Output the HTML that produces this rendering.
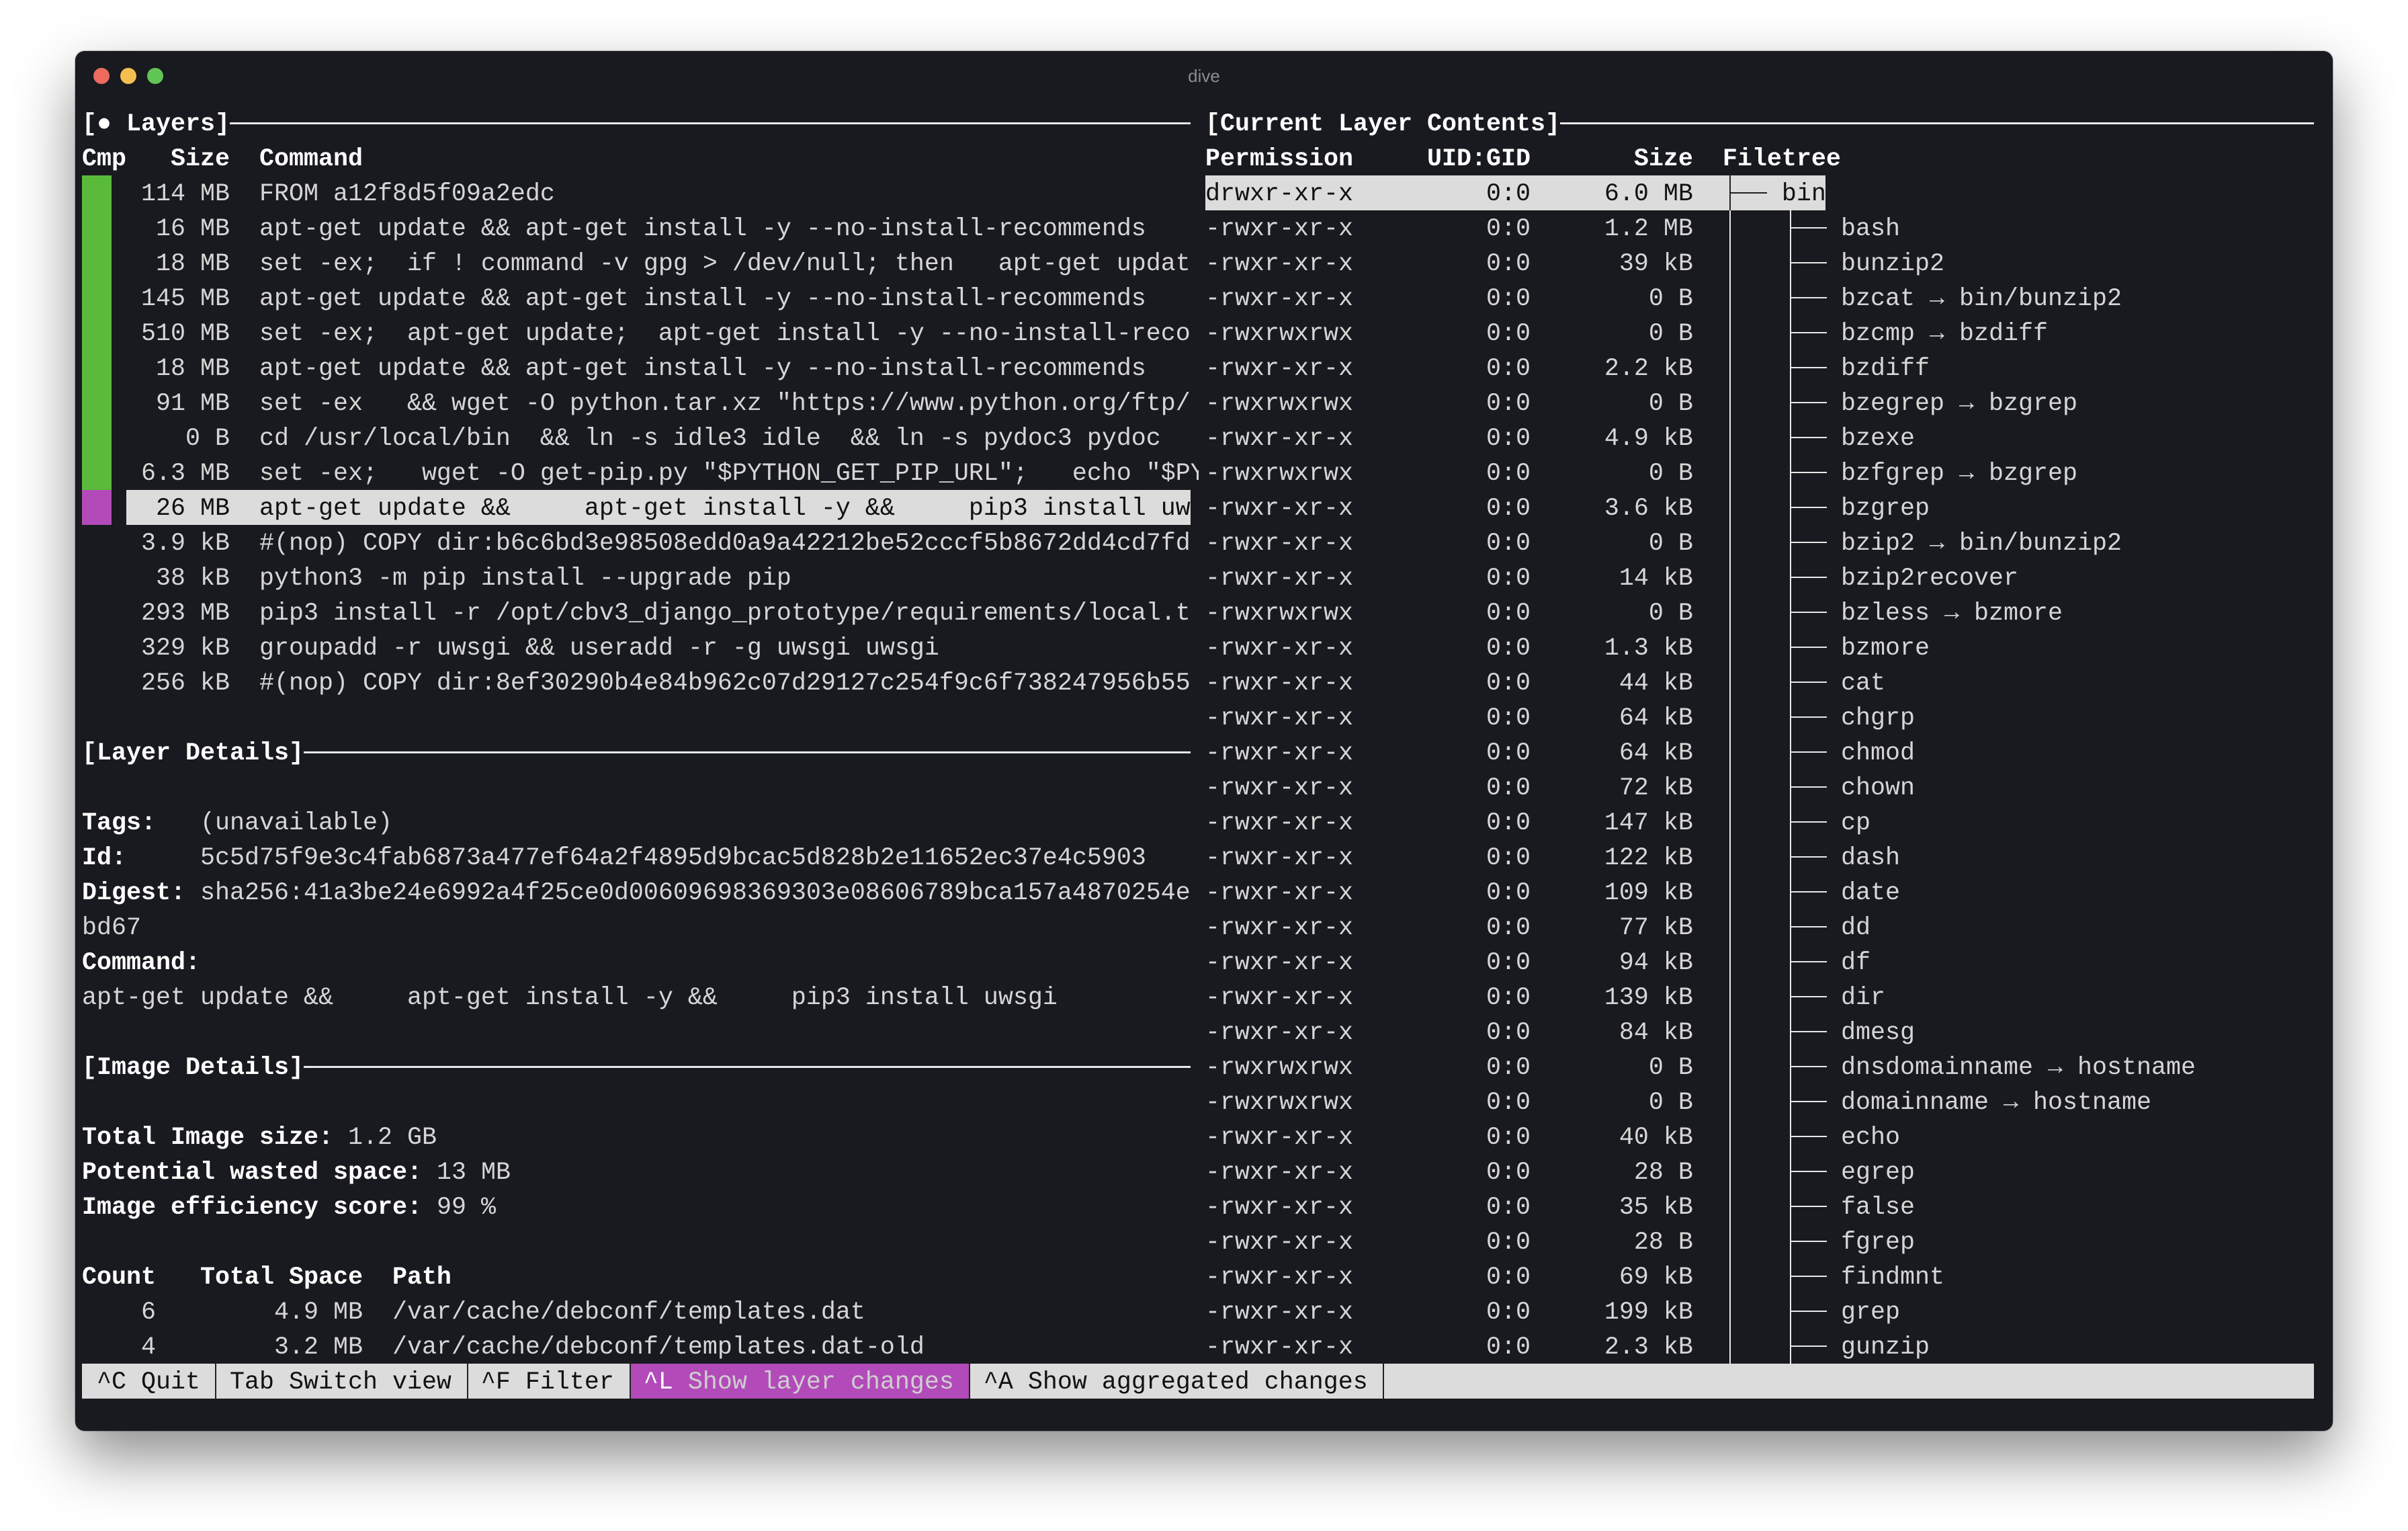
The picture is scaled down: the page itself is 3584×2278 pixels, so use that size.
<!DOCTYPE html>
<html><head><meta charset="utf-8">
<style>
html,body{margin:0;padding:0;background:#ffffff;}
body{width:3584px;height:2278px;position:relative;overflow:hidden;}
.win{position:absolute;left:112px;top:76px;width:3360px;height:2053px;background:#181a1f;border-radius:14px;box-shadow:0 40px 90px rgba(0,0,0,0.45),0 0 0 1px rgba(0,0,0,0.25);}
.dot{position:absolute;top:101px;width:24px;height:24px;border-radius:50%;}
.title{position:absolute;top:98px;left:1700px;width:184px;text-align:center;font:26px "Liberation Sans",sans-serif;color:#8a8c90;}
pre{position:absolute;margin:0;font-family:"Liberation Mono","DejaVu Sans Mono",monospace;font-size:36.67px;line-height:52px;color:#d6d6d6;white-space:pre;}
b{font-weight:bold;color:#ffffff;}
.w{color:#ffffff;}
.k{color:#111111;}
.abs{position:absolute;}
.hl{background:#dcdcdc;}
.ln{position:absolute;background:#e8e8e8;}
.clip{position:absolute;left:122px;top:157px;width:1662px;height:1872px;overflow:hidden;}
</style></head><body>
<div class="win"></div>
<div class="dot" style="left:139px;background:#ed6a5e"></div>
<div class="dot" style="left:179px;background:#f5bf4f"></div>
<div class="dot" style="left:219px;background:#61c554"></div>
<div class="title">dive</div>

<div class="abs" style="left:122px;top:261px;width:44px;height:468px;background:#5abb3b"></div>
<div class="abs" style="left:122px;top:729px;width:44px;height:52px;background:#b24bb9"></div>
<div class="abs hl" style="left:188px;top:729px;width:1584px;height:52px"></div>

<div class="abs hl" style="left:1794px;top:261px;width:923px;height:52px"></div>

<div class="ln" style="left:342px;top:182px;width:1430px;height:3px"></div>
<div class="ln" style="left:2322px;top:182px;width:1122px;height:3px"></div>
<div class="ln" style="left:452px;top:1118px;width:1320px;height:3px"></div>
<div class="ln" style="left:452px;top:1586px;width:1320px;height:3px"></div>

<div class="ln" style="left:2574px;top:261px;width:2px;height:52px;background:#222"></div>
<div class="ln" style="left:2574px;top:313px;width:2px;height:1716px"></div>
<div class="ln" style="left:2576px;top:286px;width:54px;height:2px;background:#222"></div>
<div class="ln" style="left:2664px;top:313px;width:2px;height:1716px"></div>
<div class="abs" style="left:2665px;top:338px;width:54px;height:1691px;background:repeating-linear-gradient(to bottom,#e8e8e8 0,#e8e8e8 2px,transparent 2px,transparent 52px)"></div>

<div class="clip"><pre style="left:0;top:2px"><b>[● Layers]</b>
<b>Cmp   Size  Command</b>
    114 MB  FROM a12f8d5f09a2edc
     16 MB  apt-get update &amp;&amp; apt-get install -y --no-install-recommends
     18 MB  set -ex;  if ! command -v gpg &gt; /dev/null; then   apt-get updat
    145 MB  apt-get update &amp;&amp; apt-get install -y --no-install-recommends
    510 MB  set -ex;  apt-get update;  apt-get install -y --no-install-reco
     18 MB  apt-get update &amp;&amp; apt-get install -y --no-install-recommends
     91 MB  set -ex   &amp;&amp; wget -O python.tar.xz "https://www.python.org/ftp/
       0 B  cd /usr/local/bin  &amp;&amp; ln -s idle3 idle  &amp;&amp; ln -s pydoc3 pydoc
    6.3 MB  set -ex;   wget -O get-pip.py "$PYTHON_GET_PIP_URL";   echo "$PY
<span class="k">     26 MB  apt-get update &amp;&amp;     apt-get install -y &amp;&amp;     pip3 install uw</span>
    3.9 kB  #(nop) COPY dir:b6c6bd3e98508edd0a9a42212be52cccf5b8672dd4cd7fd
     38 kB  python3 -m pip install --upgrade pip
    293 MB  pip3 install -r /opt/cbv3_django_prototype/requirements/local.t
    329 kB  groupadd -r uwsgi &amp;&amp; useradd -r -g uwsgi uwsgi
    256 kB  #(nop) COPY dir:8ef30290b4e84b962c07d29127c254f9c6f738247956b55

<b>[Layer Details]</b>

<b>Tags:</b>   (unavailable)
<b>Id:</b>     5c5d75f9e3c4fab6873a477ef64a2f4895d9bcac5d828b2e11652ec37e4c5903
<b>Digest:</b> sha256:41a3be24e6992a4f25ce0d00609698369303e08606789bca157a4870254e
bd67
<b>Command:</b>
apt-get update &amp;&amp;     apt-get install -y &amp;&amp;     pip3 install uwsgi

<b>[Image Details]</b>

<b>Total Image size:</b> 1.2 GB
<b>Potential wasted space:</b> 13 MB
<b>Image efficiency score:</b> 99 %

<b>Count   Total Space  Path</b>
    6        4.9 MB  /var/cache/debconf/templates.dat
    4        3.2 MB  /var/cache/debconf/templates.dat-old</pre></div>

<pre style="left:1794px;top:159px"><b>[Current Layer Contents]</b>
<b>Permission     UID:GID       Size  Filetree</b>
<span class="k">drwxr-xr-x         0:0     6.0 MB      bin</span>
-rwxr-xr-x         0:0     1.2 MB
-rwxr-xr-x         0:0      39 kB
-rwxr-xr-x         0:0        0 B
-rwxrwxrwx         0:0        0 B
-rwxr-xr-x         0:0     2.2 kB
-rwxrwxrwx         0:0        0 B
-rwxr-xr-x         0:0     4.9 kB
-rwxrwxrwx         0:0        0 B
-rwxr-xr-x         0:0     3.6 kB
-rwxr-xr-x         0:0        0 B
-rwxr-xr-x         0:0      14 kB
-rwxrwxrwx         0:0        0 B
-rwxr-xr-x         0:0     1.3 kB
-rwxr-xr-x         0:0      44 kB
-rwxr-xr-x         0:0      64 kB
-rwxr-xr-x         0:0      64 kB
-rwxr-xr-x         0:0      72 kB
-rwxr-xr-x         0:0     147 kB
-rwxr-xr-x         0:0     122 kB
-rwxr-xr-x         0:0     109 kB
-rwxr-xr-x         0:0      77 kB
-rwxr-xr-x         0:0      94 kB
-rwxr-xr-x         0:0     139 kB
-rwxr-xr-x         0:0      84 kB
-rwxrwxrwx         0:0        0 B
-rwxrwxrwx         0:0        0 B
-rwxr-xr-x         0:0      40 kB
-rwxr-xr-x         0:0       28 B
-rwxr-xr-x         0:0      35 kB
-rwxr-xr-x         0:0       28 B
-rwxr-xr-x         0:0      69 kB
-rwxr-xr-x         0:0     199 kB
-rwxr-xr-x         0:0     2.3 kB</pre>

<pre style="left:2740px;top:315px">bash
bunzip2
bzcat → bin/bunzip2
bzcmp → bzdiff
bzdiff
bzegrep → bzgrep
bzexe
bzfgrep → bzgrep
bzgrep
bzip2 → bin/bunzip2
bzip2recover
bzless → bzmore
bzmore
cat
chgrp
chmod
chown
cp
dash
date
dd
df
dir
dmesg
dnsdomainname → hostname
domainname → hostname
echo
egrep
false
fgrep
findmnt
grep
gunzip</pre>

<div class="abs" style="left:122px;top:2029px;width:3322px;height:52px;background:#dcdcdc"></div>
<div class="abs" style="left:938px;top:2029px;width:505px;height:52px;background:#b24bb9"></div>
<div class="abs" style="left:320px;top:2029px;width:2px;height:52px;background:#222"></div>
<div class="abs" style="left:695px;top:2029px;width:2px;height:52px;background:#222"></div>
<div class="abs" style="left:937px;top:2029px;width:2px;height:52px;background:#222"></div>
<div class="abs" style="left:1442px;top:2029px;width:2px;height:52px;background:#222"></div>
<div class="abs" style="left:2058px;top:2029px;width:2px;height:52px;background:#222"></div>
<pre style="left:122px;top:2031px;color:#111"> ^C Quit  Tab Switch view  ^F Filter  <span class="w">^L</span><span style="color:#cfcfcf"> Show layer changes</span>  ^A Show aggregated changes</pre>
</body></html>
